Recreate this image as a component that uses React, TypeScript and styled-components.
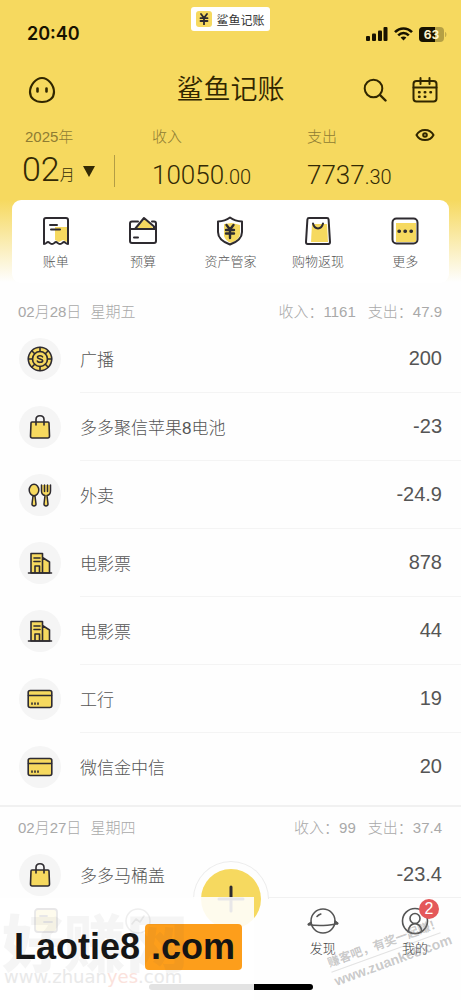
import React from "react";
import styled, { createGlobalStyle } from "styled-components";

const INK = "#2e2b30";
const YELLOW = "#f6d95f";
const SANS = '"Liberation Sans", "Noto Sans CJK SC", sans-serif';
const LIGHT = 'Roboto, "Noto Sans CJK SC", sans-serif';

const Global = createGlobalStyle`
  *, *::before, *::after { box-sizing: border-box; }
  body { margin: 0; font-family: ${SANS}; font-weight: 300; color: #555; background: #fefefe; }
  button { font: inherit; color: inherit; background: none; border: 0; padding: 0; cursor: pointer; }
  h1, h2, ul, p { margin: 0; padding: 0; font-weight: inherit; }
  ul { list-style: none; }
  svg { display: block; }
`;

const Screen = styled.div`
  height: 100vh;
  display: flex;
  flex-direction: column;
  position: relative;
  overflow: hidden;
`;

const Main = styled.main`
  flex: 1;
  min-height: 0;
  overflow: hidden;
  background: linear-gradient(${YELLOW} 0, ${YELLOW} 200px, #fefefe 282px);
`;

const StatusBar = styled.div`
  height: 66px;
  display: grid;
  grid-template-columns: 1fr auto 1fr;
  padding: 7px 14px 0;
  color: #171200;
`;

const Clock = styled.time`
  font: 600 18px/24px Inter, sans-serif;
  padding: 15px 0 0 13px;
`;

const AppPill = styled.div`
  height: 24px;
  display: flex;
  align-items: center;
  gap: 4px;
  padding: 0 5px;
  border-radius: 3px;
  background: #fff;
  color: #333;
  font-size: 12px;
  font-weight: 400;
`;

const Coin = styled.span`
  width: 16px;
  height: 16px;
  border-radius: 3px;
  background: ${YELLOW};
  display: grid;
  place-items: center;
`;

const StatusIcons = styled.div`
  display: flex;
  justify-content: flex-end;
  align-items: flex-start;
  padding-top: 20px;
  gap: 6px;
`;

const TitleBar = styled.header`
  height: 48px;
  display: grid;
  grid-template-columns: 1fr auto 1fr;
  align-items: center;
  padding: 0 23px;
  color: #302600;
`;

const Avatar = styled.button`
  justify-self: start;
  padding-left: 5px;
`;

const Brand = styled.h1`
  font-size: 27px;
  line-height: 32px;
  font-weight: 350;
`;

const Actions = styled.div`
  display: flex;
  justify-content: flex-end;
  align-items: center;
  gap: 25px;
`;

const Summary = styled.section`
  height: 86px;
  display: grid;
  grid-template-columns: 116px minmax(0, 169fr) minmax(0, 128fr);
  padding: 11px 26px 0 22px;
  color: #332a05;
`;

const Figure = styled.div`
  &:nth-child(2) { padding-left: 14px; }
`;

const Caption = styled.div<{ $inset?: number }>`
  height: 20px;
  display: flex;
  align-items: center;
  justify-content: space-between;
  padding-left: ${(p) => p.$inset ?? 0}px;
  font-size: 15px;
  color: #8e7c33;
`;

const MonthButton = styled.button`
  width: 93px;
  height: 32px;
  margin-top: 10px;
  display: flex;
  align-items: center;
  border-right: 1px solid #b39d45;
  font: 300 34px/32px ${LIGHT};
`;

const MonthNumber = styled.span`
  line-height: 32px;
  margin-top: -4px;
`;

const MonthUnit = styled.span`
  font-size: 15px;
  line-height: 16px;
  padding-top: 8px;
  margin-right: 8px;
`;

const Amount = styled.div`
  margin-top: 14px;
  font: 300 26px/32px ${LIGHT};
`;

const Cents = styled.span`
  font-size: 20px;
`;

const Shortcuts = styled.nav`
  height: 83px;
  margin: 0 12px;
  display: grid;
  grid-template-columns: repeat(5, 1fr);
  background: #fff;
  border-radius: 9px;
`;

const Shortcut = styled.button`
  display: flex;
  flex-direction: column;
  align-items: center;
  padding-top: 16px;
  gap: 6px;
  font-size: 13px;
  line-height: 20px;
  color: #555;
`;

const Days = styled.div`
  padding-top: 8px;
`;

const Day = styled.section`
  & + & { border-top: 2px solid #f1f1f1; margin-top: 4px; }
`;

const DayHeader = styled.div`
  height: 34px;
  display: flex;
  justify-content: space-between;
  padding: 11px 19px 0 18px;
  font-size: 15px;
  line-height: 20px;
  color: #a9a9a9;
`;

const Pair = styled.h2<{ $gap: number }>`
  display: flex;
  gap: ${(p) => p.$gap}px;
  font-size: 15px;
`;

const Entry = styled.li`
  height: 68px;
  display: flex;
  align-items: center;
  padding-left: 19px;
`;

const Bubble = styled.span`
  width: 42px;
  height: 42px;
  border-radius: 50%;
  background: #f5f5f5;
  display: grid;
  place-items: center;
  margin-right: 19px;
`;

const EntryBody = styled.div<{ $last: boolean }>`
  flex: 1;
  height: 68px;
  display: flex;
  align-items: center;
  justify-content: space-between;
  padding-right: 19px;
  border-bottom: 1px solid ${(p) => (p.$last ? "transparent" : "#f4f4f4")};
  font-size: 17px;
`;

const Value = styled.span`
  font-size: 20px;
`;

const TabBar = styled.nav`
  position: relative;
  height: 103px;
  display: grid;
  grid-template-columns: repeat(5, 1fr);
  background: #fefefe;
  border-top: 1px solid #f1f1f1;
`;

const Tab = styled.button`
  display: flex;
  flex-direction: column;
  align-items: center;
  justify-content: flex-start;
  padding-top: 9px;
  gap: 4px;
  font-size: 13px;
  line-height: 20px;
  color: #444;
`;

const TabIcon = styled.span`
  position: relative;
`;

const Badge = styled.span`
  position: absolute;
  top: -8px;
  left: 18px;
  width: 20px;
  height: 20px;
  border-radius: 50%;
  background: #e4585a;
  color: #fff;
  font-size: 16px;
  line-height: 20px;
  text-align: center;
`;

const Halo = styled.span`
  position: absolute;
  top: -37px;
  left: calc(50% - 38px);
  width: 76px;
  height: 38px;
  border-radius: 38px 38px 0 0;
  border: 1px solid #ececec;
  border-bottom: 0;
  background: #fefefe;
`;

const AddButton = styled.button`
  position: absolute;
  top: -29px;
  left: calc(50% - 30px);
  width: 60px;
  height: 60px;
  border-radius: 50%;
  background: ${YELLOW};
  display: grid;
  place-items: center;
`;

const HomeBar = styled.span`
  position: absolute;
  bottom: 10px;
  left: calc(50% - 82px);
  width: 164px;
  height: 6px;
  border-radius: 3px;
  background: #000;
`;

const Stamp = styled.aside`
  position: absolute;
  left: 0;
  bottom: 0;
  width: 254px;
  height: 103px;
  background: rgba(255, 255, 255, 0.89);
`;

const StampLogo = styled.p`
  position: absolute;
  left: 14px;
  top: 27px;
  display: flex;
  align-items: center;
  height: 46px;
  font: 700 36px/46px "Liberation Sans", sans-serif;
  color: #141414;
`;

const StampSuffix = styled.span`
  height: 46px;
  margin-left: 5px;
  padding: 0 7px 0 6px;
  border-radius: 4px;
  background: #fd9e1b;
`;

const GhostMark = styled.div`
  position: absolute;
  left: 2px;
  top: 12px;
  font: 900 62px/62px "Noto Sans CJK SC", sans-serif;
  color: rgba(90, 90, 90, 0.06);
  white-space: nowrap;
`;

const GhostUrl = styled.div`
  position: absolute;
  left: 4px;
  top: 70px;
  font: 400 18px/20px "DejaVu Sans", sans-serif;
  color: #e9e9e9;
  white-space: nowrap;
  em { font-style: normal; color: #fbe2dc; }
`;

const Watermark = styled.aside`
  position: absolute;
  right: 17px;
  bottom: 29px;
  width: 116px;
  transform: rotate(-20deg);
  font-size: 12px;
  line-height: 18px;
  font-weight: 700;
  color: rgba(120, 120, 120, 0.4);
  white-space: nowrap;
  pointer-events: none;
`;

const WatermarkLine = styled.p`
  & + & { border-top: 1px solid rgba(120, 120, 120, 0.2); font-size: 14px; }
`;

type IconProps = { w: number; h?: number; box?: string; stroke?: string; sw?: number; children: React.ReactNode };
const Icon = ({ w, h = w, box, stroke = INK, sw = 2, children }: IconProps) => (
  <svg width={w} height={h} viewBox={box ?? `0 0 ${w} ${h}`} fill="none" stroke={stroke} strokeWidth={sw} strokeLinecap="round" strokeLinejoin="round" aria-hidden="true">
    {children}
  </svg>
);

const Yen = ({ size }: { size: number }) => (
  <Icon w={size} box="0 0 12 12" sw={1.8}>
    <path d="M3 1l3 4 3-4M6 5v6.5M2.5 5.2h7M2.5 8h7" />
  </Icon>
);

const FaceIcon = () => (
  <Icon w={28} stroke="#302600" sw={2.2}>
    <path d="M14 2C8 2 2 9 2 16c0 6 5 10 12 10s12-4 12-10C26 9 20 2 14 2z" />
    <path d="M9.500 12.500v3M18.500 12.500v3" strokeWidth="2.600" />
  </Icon>
);
const SearchIcon = () => (
  <Icon w={24} stroke="#302600" sw={2}>
    <circle cx="10.500" cy="10.500" r="8.800" />
    <path d="M17 17l5.500 5.500" strokeWidth="2.400" />
  </Icon>
);
const CalendarIcon = () => (
  <Icon w={26} stroke="#302600" sw={2}>
    <rect x="1.500" y="4" width="23" height="20.500" rx="3" />
    <path d="M1.500 10.500h23M8.500 1v6M17.500 1v6" />
    <path d="M7 15.200h.6M12.700 15.200h.6M18.400 15.200h.6M7 19.800h.6M12.700 19.800h.6" strokeWidth="2.400" />
  </Icon>
);
const EyeIcon = () => (
  <Icon w={20} h={14} stroke="#302600" sw={2}>
    <path d="M1.500 7C5 .2 15 .2 18.500 7 15 13.800 5 13.800 1.500 7z" />
    <circle cx="10" cy="7" r="1.800" />
  </Icon>
);
const SignalIcon = () => (
  <svg width="22" height="14" viewBox="0 0 22 14" fill="#171200" aria-hidden="true">
    <rect x="0" y="9" width="4" height="5" rx="1" />
    <rect x="6" y="6.500" width="4" height="7.500" rx="1" />
    <rect x="12" y="3.500" width="4" height="10.500" rx="1" />
    <rect x="17.500" y="0" width="4" height="14" rx="1" />
  </svg>
);
const WifiIcon = () => (
  <svg width="19" height="14" viewBox="0 0 19 14" fill="none" stroke="#171200" strokeWidth="2.600" aria-hidden="true">
    <path d="M1 5.200c5-5 12-5 17 0" />
    <path d="M4.200 8.400c3.200-3 7.400-3 10.600 0" />
    <path d="M9.500 13.600l-2.900-3c1.600-1.400 4.200-1.400 5.800 0z" fill="#171200" stroke="none" />
  </svg>
);
const BatteryIcon = () => (
  <svg width="28" height="15" viewBox="0 0 28 15" aria-label="63%">
    <rect width="25" height="15" rx="4" fill="#b5a044" />
    <path d="M4 0h12v15H4a4 4 0 0 1-4-4V4a4 4 0 0 1 4-4z" fill="#171200" />
    <path d="M26.200 5c1.600.5 1.600 4.500 0 5z" fill="#b5a044" />
    <text x="12.500" y="12" textAnchor="middle" fontFamily="Inter, sans-serif" fontWeight="700" fontSize="12" fill="#fff6cf">63</text>
  </svg>
);

const BillIcon = () => (
  <Icon w={30}>
    <path d="M14 11h12v15l-4-2-4 2-4-2z" fill={YELLOW} stroke="none" />
    <path d="M3 28V4c0-1.500.8-2 2-2h20c1.200 0 2 .5 2 2v24c-2.400 0-2.400-2-4-2s-1.600 2-4 2-2.400-2-4-2-1.600 2-4 2-2.400-2-4-2-1.600 2-4 2z" />
    <path d="M9 9h7M10 13.500h9" />
  </Icon>
);
const WalletIcon = () => (
  <Icon w={30}>
    <path d="M8 13L17 2.500 26 13z" fill={YELLOW} stroke="none" />
    <path d="M10 5.500H4c-1.500 0-2 .8-2 2V25c0 1.500.8 2 2 2h22c1.500 0 2-.8 2-2V7.500c0-1.500-.8-2-2-2h-2M2 13h26M7 13l9-11 10 8.500V13M6 21.500h4" />
  </Icon>
);
const ShieldIcon = () => (
  <Icon w={30}>
    <path d="M9 8l8-1 8 2v8c0 5-4 8-9 10-4-1.500-6-4-7-7z" fill={YELLOW} stroke="none" />
    <path d="M15 1.500c3.500 2.600 7.500 3.800 12 4V16c0 6-5 10-12 12.500C8 26 3 22 3 16V5.500c4.500-.2 8.500-1.400 12-4z" />
    <path d="M11.500 9l3.500 4.500L18.500 9M15 13.500V22M11 14h8M11 17.500h8" strokeWidth="2.400" />
  </Icon>
);
const ShopIcon = () => (
  <Icon w={30}>
    <path d="M9 8h15l1 18H8z" fill={YELLOW} stroke="none" />
    <path d="M6 2h18c1 0 1.500.5 1.600 1.500L27 26c0 1.200-.5 2-1.600 2H4.600C3.500 28 3 27.200 3 26L4.400 3.500C4.500 2.500 5 2 6 2zM10 7.500c1.500 6.500 8.500 6.500 10 0" />
  </Icon>
);
const MoreIcon = () => (
  <Icon w={30}>
    <rect x="6" y="7" width="20" height="19" fill={YELLOW} stroke="none" />
    <rect x="2.500" y="2.500" width="25" height="25" rx="4" />
    <path d="M9 15.200h.4M15 15.200h.4M21 15.200h.4" strokeWidth="3.400" />
  </Icon>
);

const ChipIcon = () => (
  <Icon w={26} sw={1.600}>
    <circle cx="13" cy="13" r="11.700" fill={YELLOW} />
    <circle cx="13" cy="13" r="7.500" />
    <path d="M13 1.500v4M13 20.500v4M1.500 13h4M20.500 13h4M5 5l2.700 2.700M18.300 18.300L21 21M5 21l2.700-2.700M18.300 7.700L21 5" />
    <path d="M15.500 10.800c-.6-1.400-5-1.500-5 .5 0 2.300 5.200 1.200 5.200 3.500 0 2-4.800 2-5.400.2" />
  </Icon>
);
const BagIcon = () => (
  <Icon w={26} sw={1.600}>
    <path d="M5 8h16c.6 0 1 .3 1 1l.5 13c0 1.300-.6 2-1.600 2H5.100c-1 0-1.600-.7-1.600-2L4 9c0-.7.4-1 1-1z" fill={YELLOW} />
    <path d="M9 11V5.500C9 .5 17 .5 17 5.500V11" />
  </Icon>
);
const FoodIcon = () => (
  <Icon w={26} sw={1.500}>
    <ellipse cx="7" cy="8" rx="4.800" ry="5.800" fill={YELLOW} />
    <path d="M6 14l-1 8c-.2 2.500 4.200 2.500 4 0l-1-8z" fill={YELLOW} />
    <path d="M14.500 3v6c0 3 1.800 4.200 3.500 4.500l-1 8.500c-.2 2.500 4.200 2.500 4 0l-1-8.500c1.700-.3 3.500-1.500 3.500-4.500V3M17.500 3v6.500M20.500 3v6.500" fill={YELLOW} />
  </Icon>
);
const BuildingIcon = () => (
  <Icon w={26} sw={1.600}>
    <path d="M4 23V3.500h11.500V23zM15.500 7.500L22.500 12v11h-7z" fill={YELLOW} />
    <path d="M1.500 23h23M7 8h6M7 11.500h6M8 23v-7h4.500v7" />
  </Icon>
);
const CardIcon = () => (
  <Icon w={26} sw={1.600}>
    <rect x="1.200" y="4.500" width="23.600" height="17" rx="2" fill={YELLOW} />
    <path d="M1.500 9.500h23M5 17v1.200M8 17v1.200M11 17v1.200" />
  </Icon>
);

const LedgerIcon = () => (
  <Icon w={28} sw={1.800}>
    <rect x="3" y="2" width="22" height="23" rx="3" fill={YELLOW} />
    <path d="M8 9h7M12 15h8" />
  </Icon>
);
const ChartIcon = () => (
  <Icon w={28} sw={1.600} stroke="#666">
    <circle cx="14" cy="14" r="12" />
    <path d="M8 17l4-5 4 3 4-6" />
  </Icon>
);
const PlanetIcon = () => (
  <Icon w={32} h={28} stroke="#555" sw={1.600}>
    <circle cx="16" cy="14" r="12" />
    <path d="M4 15.500L1.500 17.500c8 1.700 22 1.200 29-1L28 14M10 9.500c1-1.200 2.200-2 3.800-2.500" />
    <path d="M1.800 17.300l1.700-1M30.200 16.300l-1.700-1" strokeWidth="2.600" />
  </Icon>
);
const UserIcon = () => (
  <Icon w={28} stroke="#555" sw={1.600}>
    <circle cx="14" cy="14" r="12.500" />
    <circle cx="14" cy="11.500" r="5" />
    <path d="M7.500 24.500c0-10.500 13-10.500 13 0" />
  </Icon>
);

const shortcuts = [
  { label: "账单", icon: <BillIcon /> },
  { label: "预算", icon: <WalletIcon /> },
  { label: "资产管家", icon: <ShieldIcon /> },
  { label: "购物返现", icon: <ShopIcon /> },
  { label: "更多", icon: <MoreIcon /> },
];

const days = [
  {
    date: "02月28日", week: "星期五", income: "1161", spend: "47.9",
    entries: [
      { name: "广播", value: "200", icon: <ChipIcon /> },
      { name: "多多聚信苹果8电池", value: "-23", icon: <BagIcon /> },
      { name: "外卖", value: "-24.9", icon: <FoodIcon /> },
      { name: "电影票", value: "878", icon: <BuildingIcon /> },
      { name: "电影票", value: "44", icon: <BuildingIcon /> },
      { name: "工行", value: "19", icon: <CardIcon /> },
      { name: "微信金中信", value: "20", icon: <CardIcon /> },
    ],
  },
  {
    date: "02月27日", week: "星期四", income: "99", spend: "37.4",
    entries: [{ name: "多多马桶盖", value: "-23.4", icon: <BagIcon /> }],
  },
];

export default function App() {
  return (
    <Screen>
      <Global />
      <Main>
        <StatusBar>
          <Clock>20:40</Clock>
          <AppPill><Coin><Yen size={12} /></Coin>鲨鱼记账</AppPill>
          <StatusIcons><SignalIcon /><WifiIcon /><BatteryIcon /></StatusIcons>
        </StatusBar>
        <TitleBar>
          <Avatar aria-label="头像"><FaceIcon /></Avatar>
          <Brand>鲨鱼记账</Brand>
          <Actions>
            <button aria-label="搜索"><SearchIcon /></button>
            <button aria-label="日历"><CalendarIcon /></button>
          </Actions>
        </TitleBar>
        <Summary>
          <Figure>
            <Caption $inset={3}>2025年</Caption>
            <MonthButton>
              <MonthNumber>02</MonthNumber><MonthUnit>月</MonthUnit>
              <svg width="12" height="11" viewBox="0 0 12 11" fill="#332a05" aria-hidden="true"><path d="M0 0h12L6 11z" /></svg>
            </MonthButton>
          </Figure>
          <Figure>
            <Caption>收入</Caption>
            <Amount>10050<Cents>.00</Cents></Amount>
          </Figure>
          <Figure>
            <Caption>支出<button aria-label="隐藏金额"><EyeIcon /></button></Caption>
            <Amount>7737<Cents>.30</Cents></Amount>
          </Figure>
        </Summary>
        <Shortcuts>
          {shortcuts.map((s) => (
            <Shortcut key={s.label}>{s.icon}{s.label}</Shortcut>
          ))}
        </Shortcuts>
        <Days>
          {days.map((d) => (
            <Day key={d.date}>
              <DayHeader>
                <Pair $gap={9}><span>{d.date}</span><span>{d.week}</span></Pair>
                <Pair as="div" $gap={12}><span>收入：{d.income}</span><span>支出：{d.spend}</span></Pair>
              </DayHeader>
              <ul>
                {d.entries.map((e, i) => (
                  <Entry key={i}>
                    <Bubble>{e.icon}</Bubble>
                    <EntryBody $last={i === d.entries.length - 1}>
                      <span>{e.name}</span>
                      <Value>{e.value}</Value>
                    </EntryBody>
                  </Entry>
                ))}
              </ul>
            </Day>
          ))}
        </Days>
      </Main>
      <TabBar>
        <Tab aria-label="明细"><LedgerIcon /></Tab>
        <Tab aria-label="图表"><ChartIcon /></Tab>
        <span />
        <Tab><TabIcon><PlanetIcon /></TabIcon>发现</Tab>
        <Tab><TabIcon><UserIcon /><Badge>2</Badge></TabIcon>我的</Tab>
        <Halo />
        <AddButton aria-label="记账">
          <Icon w={28} sw={3}><path d="M14 2v24M2 14h24" /></Icon>
        </AddButton>
        <HomeBar />
      </TabBar>
      <Watermark>
        <WatermarkLine>赚客吧，有奖一起赚！</WatermarkLine>
        <WatermarkLine>www.zuanke8.com</WatermarkLine>
      </Watermark>
      <Stamp>
        <StampLogo>Laotie8<StampSuffix>.com</StampSuffix></StampLogo>
        <GhostMark>好赚网</GhostMark>
        <GhostUrl>www.zhuan<em>yes</em>.com</GhostUrl>
      </Stamp>
    </Screen>
  );
}
